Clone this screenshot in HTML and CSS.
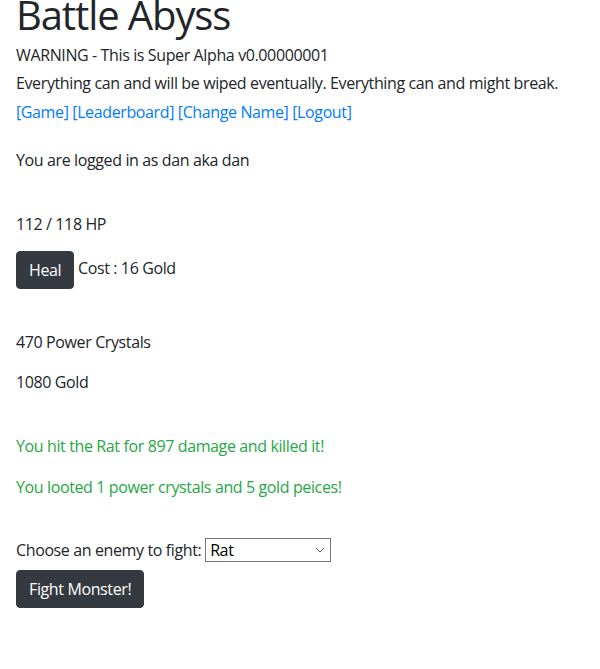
FILE: index.html
```html
<!DOCTYPE html>
<html>
<head>
<meta charset="utf-8">
<link rel="stylesheet" href="styles.css">
</head>
<body>
<div class="page">
  <h1 class="title">Battle Abyss</h1>
  <div class="line warn">WARNING - This is Super Alpha v0.00000001</div>
  <div class="line wipe">Everything can and will be wiped eventually. Everything can and might break.</div>
  <nav class="line nav"><a href="#">[Game]</a> <a href="#">[Leaderboard]</a> <a href="#">[Change Name]</a> <a href="#">[Logout]</a></nav>
  <div class="line logged">You are logged in as dan aka dan</div>
  <div class="line hp">112 / 118 HP</div>
  <div class="heal-row"><button class="btn">Heal</button> <span class="cost">Cost : 16 Gold</span></div>
  <div class="line crystals">470 Power Crystals</div>
  <div class="line gold">1080 Gold</div>
  <div class="line msg msg1">You hit the Rat for 897 damage and killed it!</div>
  <div class="line msg msg2">You looted 1 power crystals and 5 gold peices!</div>
  <div class="line choose">Choose an enemy to fight: <span class="select-wrap"><select class="enemy"><option>Rat</option></select><svg class="chev" width="10" height="6" viewBox="0 0 10 6"><path d="M1 1 L5 5 L9 1" fill="none" stroke="#555" stroke-width="1"/></svg></span></div>
  <button class="btn fight">Fight Monster!</button>
</div>
</body>
</html>
```
FILE: styles.css
```css
html, body {
  margin: 0;
  padding: 0;
  background: #fff;
}
body {
  font-family: "Open Sans", "Noto Sans", sans-serif;
  font-size: 16px;
  line-height: 24px;
  letter-spacing: -0.38px;
  color: #212529;
}
.page {
  padding-left: 16px;
}
.title {
  font-size: 40px;
  line-height: 40px;
  font-weight: 400;
  letter-spacing: -1.1px;
  margin: -5px 0 7px 0;
  color: #212529;
}
.line {
  box-sizing: border-box;
  height: 24px;
  padding-top: 1px;
  white-space: nowrap;
}
.wipe { margin-top: 4px; }
.nav { margin-top: 5px; }
.nav a {
  color: #007bff;
  text-decoration: none;
}
.logged { margin-top: 24px; }
.hp { margin-top: 40px; }
.heal-row {
  margin-top: 16px;
  height: 38px;
}
.btn {
  display: inline-block;
  font-family: inherit;
  font-size: 16px;
  line-height: 24px;
  letter-spacing: -0.38px;
  padding: 6px 12px;
  border: 1px solid #343a40;
  background: #343a40;
  color: #fff;
  border-radius: 4px;
  margin: 0;
  vertical-align: top;
}
.cost {
  display: inline-block;
  vertical-align: top;
  margin-top: 5px;
}
.crystals { margin-top: 40px; }
.gold { margin-top: 16px; }
.msg { color: #28a745; }
.msg1 { margin-top: 40px; }
.msg2 { margin-top: 17px; }
.choose { margin-top: 40px; padding-top: 0; }
.select-wrap {
  position: relative;
  display: inline-block;
  vertical-align: top;
}
.enemy {
  appearance: none;
  -webkit-appearance: none;
  width: 126px;
  height: 24px;
  font-family: inherit;
  font-size: 16px;
  line-height: 22px;
  letter-spacing: -0.38px;
  padding: 0 0 0 4px;
  border: 1px solid #767676;
  border-radius: 0;
  background: #fff;
  color: #000;
  margin: 0;
}
.chev {
  position: absolute;
  right: 6px;
  top: 9px;
}
.fight {
  display: block;
  margin-top: 8px;
}
```
